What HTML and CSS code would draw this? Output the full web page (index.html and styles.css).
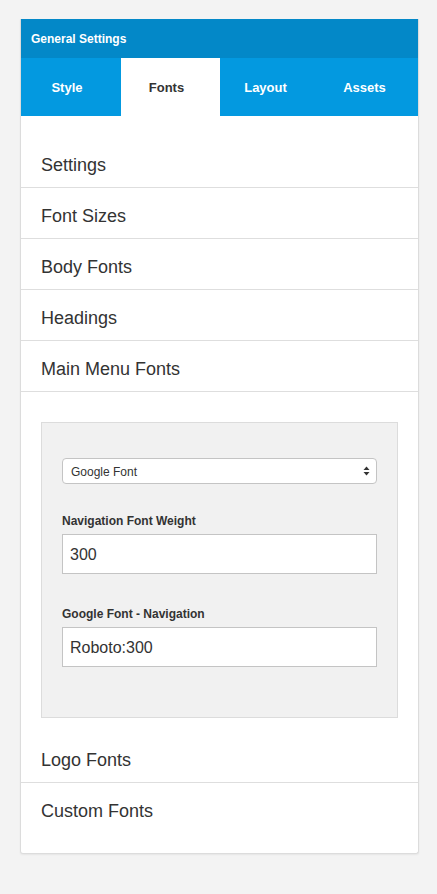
FILE: index.html
```html
<!DOCTYPE html>
<html>
<head>
<meta charset="utf-8">
<link rel="stylesheet" href="styles.css">
</head>
<body>
<div class="card">
  <div class="card-header">General Settings</div>
  <div class="tabs">
    <div class="tab">Style</div>
    <div class="tab active">Fonts</div>
    <div class="tab">Layout</div>
    <div class="tab">Assets</div>
  </div>
  <div class="sections">
    <div class="section">Settings</div>
    <div class="section">Font Sizes</div>
    <div class="section">Body Fonts</div>
    <div class="section">Headings</div>
    <div class="section">Main Menu Fonts</div>
    <div class="panel-wrap">
      <div class="panel">
        <div class="select">
          <span>Google Font</span>
          <svg class="arrows" width="7" height="10" viewBox="0 0 7 10"><path d="M3.5 0.5 L6.5 4 L0.5 4 Z" fill="#333"/><path d="M3.5 9.5 L6.5 6 L0.5 6 Z" fill="#333"/></svg>
        </div>
        <div class="field">
          <div class="label">Navigation Font Weight</div>
          <div class="input">300</div>
        </div>
        <div class="field">
          <div class="label">Google Font - Navigation</div>
          <div class="input">Roboto:300</div>
        </div>
      </div>
    </div>
    <div class="section">Logo Fonts</div>
    <div class="section last">Custom Fonts</div>
  </div>
</div>
</body>
</html>
```
FILE: styles.css
```css
html, body {
  margin: 0;
  padding: 0;
  background: #f3f3f3;
  font-family: "Liberation Sans", Arial, sans-serif;
  color: #333;
}
body {
  padding: 19px 18px 40px 20px;
}
.card {
  width: 399px;
  background: #fff;
  border: 1px solid #dcdcdc;
  border-top: none;
  border-radius: 0 0 3px 3px;
  box-shadow: 0 1px 2px rgba(0,0,0,0.06);
  box-sizing: border-box;
}
.card-header {
  height: 38px;
  padding-top: 1px;
  background: #0388c8;
  color: #fff;
  font-size: 12px;
  font-weight: bold;
  line-height: 39px;
  padding-left: 10px;
}
.tabs {
  display: grid;
  grid-template-columns: 100px 99px 99px 1fr;
  height: 58px;
  background: #0399e0;
}
.tab {
  display: flex;
  align-items: center;
  justify-content: center;
  padding-right: 8px;
  color: #fff;
  font-size: 13px;
  font-weight: bold;
}
.tab.active {
  background: #fff;
  color: #333;
}
.sections {
  padding: 21px 0 20px 0;
}
.section {
  height: 44px;
  padding-top: 6px;
  line-height: 44px;
  font-size: 18px;
  padding-left: 20px;
  border-bottom: 1px solid #dedede;
}
.section.last {
  border-bottom: none;
}
.panel-wrap {
  padding: 30px 20px 14px 20px;
}
.panel {
  background: #f1f1f1;
  border: 1px solid #dcdcdc;
  padding: 35px 20px 50px 20px;
}
.select {
  height: 26px;
  box-sizing: border-box;
  background: #fff;
  border: 1px solid #c4c4c4;
  border-radius: 4px;
  display: flex;
  align-items: center;
  justify-content: space-between;
  padding: 2px 6px 0 8px;
  font-size: 12px;
}
.arrows {
  display: block;
  margin-top: -2px;
}
.field {
  margin-top: 30px;
}
.field + .field {
  margin-top: 33px;
}
.label {
  font-size: 12px;
  font-weight: bold;
  line-height: 14px;
  margin-bottom: 6px;
}
.input {
  height: 40px;
  box-sizing: border-box;
  background: #fff;
  border: 1px solid #c4c4c4;
  font-size: 16px;
  line-height: 36px;
  padding: 2px 0 0 7px;
}
```
